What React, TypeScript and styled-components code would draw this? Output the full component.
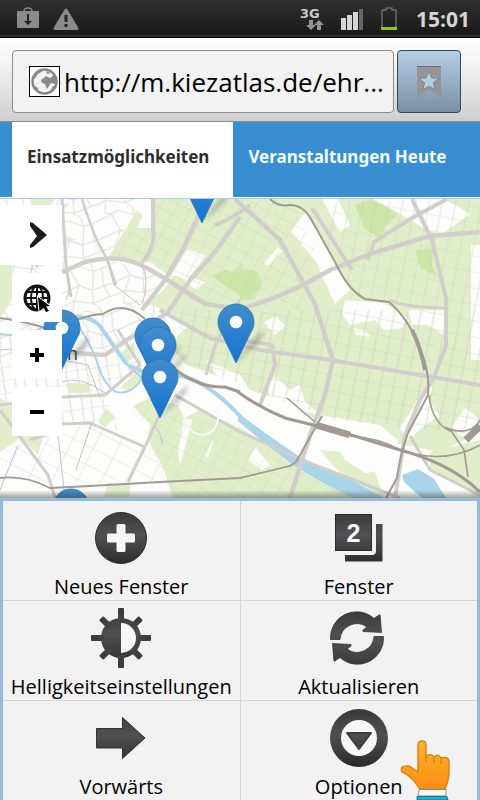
import React from 'react';
import styled, { createGlobalStyle } from 'styled-components';

const GlobalStyle = createGlobalStyle`
  * { box-sizing: border-box; }
  body { margin: 0; font-family: "Open Sans", "Noto Sans", sans-serif; background: #f2f2f2; }
  button { font: inherit; border: 0; padding: 0; }
`;

const Page = styled.div`
  min-height: 100vh;
  display: flex;
  flex-direction: column;
  overflow: hidden;
`;

const StatusBar = styled.header`
  height: 38px;
  display: flex;
  align-items: center;
  justify-content: space-between;
  padding: 0 10px 0 16px;
  background: linear-gradient(#2f2f2f, #191919 35px, #4a4a4a 36px, #000 37px);
`;

const StatusGroup = styled.div<{ $gap: number }>`
  display: flex;
  align-items: center;
  gap: ${(p) => p.$gap}px;
`;

const Network = styled.span`
  display: flex;
  flex-direction: column;
  align-items: flex-end;
  width: 24px;
  color: #c9c9c9;
  font: bold 13px/12px "DejaVu Sans", sans-serif;

  span { align-self: flex-start; }
`;

const Clock = styled.time`
  color: #d6d6d6;
  font-weight: 700;
  font-size: 21px;
  line-height: 24px;
  margin-left: 2px;
`;

const AddressBar = styled.form`
  display: flex;
  gap: 3px;
  height: 84px;
  padding: 12px 19px 21px 12px;
  background: linear-gradient(#fff, #f4f4f4 30%, #cfcfcf);
  border-bottom: 1px solid #8b8f92;
`;

const AddressField = styled.label`
  flex: 1;
  min-width: 0;
  display: flex;
  align-items: center;
  gap: 4px;
  height: 63px;
  padding: 0 8px 0 16px;
  border: 1px solid #8c8c8c;
  border-radius: 4px;
  background: #f2f2f2;
`;

const AddressInput = styled.input`
  flex: 1;
  min-width: 0;
  border: 0;
  padding: 0;
  background: none;
  color: #000;
  font: 26px/36px "Open Sans", sans-serif;
  outline: none;
`;

const BookmarkButton = styled.button`
  width: 64px;
  height: 63px;
  display: grid;
  place-items: center;
  border: 1px solid #35465c;
  border-radius: 4px;
  background: linear-gradient(#b5cde3, #97afc6 50%, #7c8fa3);
`;

const Tabs = styled.nav`
  display: flex;
  height: 76px;
  padding-left: 12px;
  background: #388ed0;
  border-bottom: 1px solid #fff;
`;

const Tab = styled.a<{ $active?: boolean }>`
  padding: 23px 24px 0 15px;
  font-family: "Noto Sans", sans-serif;
  font-size: 17px;
  line-height: 24px;
  font-weight: 700;
  white-space: nowrap;
  text-decoration: none;
  color: ${(p) => (p.$active ? '#2e2e2e' : '#f2fdff')};
  background: ${(p) => (p.$active ? '#fff' : 'transparent')};
`;

const MapArea = styled.main`
  position: relative;
  flex: 1;
  min-height: 300px;
  border-top: 1px solid #a3cfea;
  background: #fcfcfa;
  overflow: hidden;
`;

const MapDrawing = styled.svg`
  position: absolute;
  inset: 0;
  width: 100%;
  height: 100%;
`;

const MapShade = styled.div`
  position: absolute;
  inset: auto 0 0;
  height: 8px;
  background: linear-gradient(transparent, rgba(70, 70, 60, 0.5));
`;

const MapControls = styled.div`
  position: absolute;
  top: 6px;
  left: 0;
  display: flex;
  flex-direction: column;
  align-items: flex-end;
  gap: 8px;
`;

const MapButton = styled.button<{ $wide?: boolean }>`
  display: flex;
  align-items: center;
  justify-content: center;
  width: ${(p) => (p.$wide ? 62 : 50)}px;
  height: ${(p) => (p.$wide ? 60 : 49)}px;
  padding-left: ${(p) => (p.$wide ? 14 : 0)}px;
  background: #fff;
`;

const Menu = styled.div`
  display: grid;
  grid-template-columns: 1fr 1fr;
  gap: 1px;
  padding: 3px 3px 0;
  background:
    linear-gradient(#d3d5d8, #d3d5d8) 3px 3px / calc(100% - 6px) 100% no-repeat,
    #97bbdc;
`;

const MenuItem = styled.button`
  display: flex;
  flex-direction: column;
  align-items: center;
  justify-content: flex-start;
  gap: 6px;
  height: 99px;
  min-width: 0;
  padding-top: 7px;
  background: #f2f2f2;
  color: #000;
  font-size: 20px;
  line-height: 26px;
  white-space: nowrap;
`;

const Pointer = styled.svg`
  position: fixed;
  right: 28px;
  bottom: 0;
  pointer-events: none;
`;

const pins = [
  [202, 182], [153, 336], [158, 345], [160, 377], [236, 322], [62, 328], [71, 507],
];

function Pin({ x, y }: { x: number; y: number }) {
  return (
    <g transform={`translate(${x} ${y})`}>
      <path d="M0 40L13 22Q24 8 28 9Q28 20 0 40Z" fill="#444" opacity=".28" filter="url(#soft)" />
      <path d="M0 41L-14 12C-17 7 -18 4 -18 0A18 18 0 1 1 18 0C18 4 17 7 14 12Z" fill="url(#pin)" stroke="#2474b4" strokeWidth=".8" />
      <circle r="6.3" fill="#fff" />
    </g>
  );
}

function CityMap() {
  return (
    <MapDrawing viewBox="0 199 480 299" preserveAspectRatio="xMidYMid slice" role="img" aria-label="Karte">
      <defs>
        <linearGradient id="pin" x1="0" y1="0" x2="0" y2="1">
          <stop offset="0" stopColor="#438dca" />
          <stop offset="1" stopColor="#1273d4" />
        </linearGradient>
        <filter id="soft"><feGaussianBlur stdDeviation="2" /></filter>
        <pattern id="gridA" width="14" height="12" patternUnits="userSpaceOnUse" patternTransform="rotate(28)">
          <path d="M0 0H14M0 0V12" stroke="#c9cbb9" strokeWidth=".9" fill="none" />
        </pattern>
        <pattern id="gridB" width="13" height="16" patternUnits="userSpaceOnUse" patternTransform="rotate(11)">
          <path d="M0 0H13M5 0V16" stroke="#c9cfb5" strokeWidth=".9" fill="none" />
        </pattern>
        <pattern id="gridC" width="52" height="46" patternUnits="userSpaceOnUse" patternTransform="rotate(-12)">
          <path d="M0 6L20 0 35 9 52 6M0 24L18 20 30 27 52 24M6 46L10 34 28 40 52 36M12 2L18 20 10 34M35 9L30 27 28 40 34 46M44 7L42 25 46 37M30 27L18 20M0 37L10 34M34 0L35 9M6 0L12 2" stroke="#dcd8d6" strokeWidth=".9" fill="none" />
        </pattern>
        <pattern id="gridD" width="21" height="13" patternUnits="userSpaceOnUse" patternTransform="rotate(-8)">
          <path d="M0 0H21M4 0V13M13 0L14 13" stroke="#dcd8d6" strokeWidth=".9" fill="none" />
        </pattern>
        <pattern id="gridE" width="22" height="17" patternUnits="userSpaceOnUse" patternTransform="rotate(27)">
          <path d="M0 0H22M0 0V17" stroke="#dcd8d6" strokeWidth=".9" fill="none" />
        </pattern>
      </defs>

      <rect x="0" y="198" width="480" height="302" fill="#fdfdfc" />
      <path d="M0 199H152L137 210 107 260 152 270 170 312 105 355 62 350 0 360Z" fill="url(#gridC)" />
      <path d="M0 360L62 350 105 355 170 312 140 370 105 395 118 430 90 423 62 424 0 430Z" fill="url(#gridD)" />
      <path d="M0 430L62 424 90 423 145 447 165 470 160 482 90 486 0 478Z" fill="url(#gridE)" />

      <g fill="#e0efca">
        <path d="M107 260L137 210 143 215 137 228 152 228 152 199H480V432L440 452 395 443 360 428 325 420 310 418 275 398 240 387 215 375 186 365 172 348 178 335 190 325 168 312 148 303 165 288 172 278 150 262Z" />
        <path d="M133 406L150 398 178 405 184 418 200 410 240 428 290 455 335 474 350 498H173L164 470 148 440 150 424Z" />
        <path d="M0 215L12 210V300L0 318ZM0 398L20 412 42 440 38 455 20 438 0 452ZM62 235L76 240 66 242ZM98 422L106 408 116 418 104 427ZM122 352L134 342 136 356 124 364ZM120 388L138 370 144 372 142 380 128 390ZM62 205L70 202 64 210ZM30 199H55L50 206H32ZM320 450L345 452 375 472 384 498H362ZM68 383L90 384V393H68ZM108 483L130 485V497H104ZM430 452L480 440V498L430 470ZM410 475L430 480 445 498H425Z" />
      </g>

      <g fill="#fdfdfc">
        <path d="M188 249L206 256 190 276 170 276ZM291 231L305 213 328 247 350 290 335 304 316 262ZM322 199H338L350 225 340 232ZM264 264L278 247 282 251 268 266ZM345 300L384 303 408 318 402 328 384 330 375 320 350 325 342 315ZM372 199H445L470 214 440 235 420 226 400 214 390 208ZM471 245H480V360H471ZM264 322L276 316 285 326 275 335ZM408 310H444V335L428 325H412ZM353 328L367 331 370 337 356 335ZM424 390L434 386 428 400 440 416 425 425 408 440 400 428ZM268 385L275 376 290 390 300 384 304 400 320 415 270 404ZM320 415L350 420 380 425 398 440 385 470 365 473 345 460ZM452 427L465 408 478 418V436L460 436ZM174 272L205 282 196 290ZM205 360L240 375 260 405 232 395ZM178 452L184 418 192 420 180 466ZM205 455L213 440 212 446 208 458ZM248 460L255 447 270 465 262 470Z" />
      </g>

      <g fill="#cbe6a4" opacity=".9">
        <path d="M355 205L372 199 398 214 385 227 380 238 365 230 359 215ZM213 275L225 270 232 272 240 265 248 280 240 296 220 282ZM415 250L433 248 432 265 438 277 420 268ZM240 268L258 272 262 285 250 300H240Z" />
      </g>

      <path d="M152 199H290L320 262 300 310 186 300 152 262H107L125 232 152 228Z" fill="url(#gridA)" opacity=".7" />
      <path d="M338 199H480V310L360 298 320 240Z" fill="url(#gridB)" opacity=".6" />
      <path d="M180 310H480V435L330 420 180 360Z" fill="url(#gridB)" opacity=".8" />
      <path d="M135 405L240 428 350 498H170Z" fill="url(#gridA)" opacity=".6" />

      <g fill="none" stroke="#a9d5ea" strokeLinecap="round">
        <path d="M74 317Q96 316 104 332L126 363" strokeWidth="4" />
        <path d="M72 316Q92 345 98 365T116 392Q132 395 142 378L124 362M0 334Q20 338 45 327" strokeWidth="2" />
        <path d="M130 366Q150 376 182 376Q208 382 240 416" strokeWidth="4" />
      </g>
      <path d="M238 413L268 435 310 464 340 474 384 498H352L318 480 292 464 262 441 238 421Z" fill="#a9d5ea" />
      <path d="M402 475L418 469 434 479 446 498H422L404 482Z" fill="#a9d5ea" />

      <g fill="none" stroke="#d2cecb" strokeWidth="4.5" strokeLinejoin="round">
        <path d="M82 199Q90 225 98 242L107 259L116 285" strokeWidth="2.5" />
        <path d="M62 272L85 262Q120 253 145 267L166 279 205 304 240 309Q285 297 330 270L370 254 430 236 480 232" />
        <path d="M153 199V230Q156 245 142 263" strokeWidth="4" />
        <path d="M206 199L184 247 165 280 142 310M240 217L215 252 190 280 168 312 105 355 60 352M235 199L280 240 315 304 328 345 333 360 325 395 310 435 290 498" />
        <path d="M160 310L210 338 260 350 330 360 420 375 480 385M240 340L272 345 275 365 260 405" strokeWidth="4" />
        <path d="M312 208L352 270M250 205Q230 220 215 225M412 199L432 240 446 298V345L435 375 420 400 405 435 395 498M368 260L374 242 412 218 447 199" strokeWidth="4" />
        <path d="M118 330L140 365 105 395 62 397 0 405M62 424L90 423 145 447 128 482M145 447L175 380M175 395L240 432 310 463 400 498M206 375L215 345 240 300M0 410L48 475 55 498M30 440L62 430M62 199L66 265 71 297M0 242L38 266" strokeWidth="3" />
        <path d="M390 300Q400 307 445 308M410 436L430 470 480 495" strokeWidth="3" />
      </g>

      <g fill="none" stroke="#c8c2bc" strokeWidth="1">
        <path d="M12 225Q40 245 30 275M107 259L114 285 140 305M142 265Q150 280 142 305M64 270Q74 286 66 300M62 360L88 365 100 398M18 445L0 490M58 435L65 498M76 470L92 422M0 350Q35 345 58 370M62 382Q80 375 105 393M155 426Q163 437 162 445" />
        <path d="M185 420Q190 435 205 435Q220 430 218 410" stroke="#f7f7f4" strokeWidth="2" />
      </g>

      <g fill="none" stroke="#a19a91">
        <path d="M0 478Q25 475 50 488L90 486 160 482 240 478 290 466 296 462 322 416" strokeWidth="1.8" />
        <path d="M0 318Q35 323 55 332Q80 315 103 314Q124 300 145 319" strokeWidth="2" />
        <path d="M176 370Q200 388 225 387L240 392" strokeWidth="3" />
        <path d="M238 392Q260 408 285 418L345 433 400 450Q450 463 480 492" strokeWidth="3" />
        <path d="M270 199Q278 207 290 205Q303 205 311 219L335 262Q348 290 365 299L389 302Q410 320 420 350Q430 370 428 395L408 433Q400 455 397 478L386 498" strokeWidth="2" />
        <path d="M287 398L315 422M350 436Q380 438 400 450Q445 465 480 445M429 395Q432 424 452 432L464 450 468 477M444 427Q470 438 480 420M470 438L480 430" strokeWidth="1.6" />
        <path d="M412 330Q421 348 425 370" strokeWidth="4" />
        <path d="M316 425L350 435" strokeWidth="7" />
        <path d="M466 440L480 426" strokeWidth="7" />
      </g>

      <text x="67" y="360" fontSize="18" fill="#3a3a3a" fontFamily="Open Sans">n</text>
      {pins.map(([x, y]) => <Pin key={`${x}-${y}`} x={x} y={y} />)}
    </MapDrawing>
  );
}

const Glyph = ({ id, children }: { id: string; children: React.ReactNode }) => (
  <svg width="60" height="60" viewBox="0 0 60 60" fill={`url(#${id})`} aria-hidden="true">
    <defs>
      <linearGradient id={id} x1="0" y1="0" x2="0" y2="60" gradientUnits="userSpaceOnUse">
        <stop offset="0" stopColor="#383838" />
        <stop offset=".45" stopColor="#505050" />
        <stop offset="1" stopColor="#282828" />
      </linearGradient>
    </defs>
    {children}
  </svg>
);

const refreshArrow = 'M1.5 31.5A26 26 0 0 1 45 10.5L50 7Q51 6 51.2 8L52.5 24.5 34 23.5V22L38 19A17 17 0 0 0 11 31.5Z';

const menu = [
  {
    label: 'Neues Fenster',
    icon: (
      <Glyph id="newWindow">
        <circle cx="30" cy="30" r="25.5" stroke="#2b2b2b" />
        <rect x="25.5" y="16" width="9" height="28" rx="1.5" fill="#f7f7f7" />
        <rect x="16" y="25.5" width="28" height="9" rx="1.5" fill="#f7f7f7" />
      </Glyph>
    ),
  },
  {
    label: 'Fenster',
    icon: (
      <Glyph id="windows">
        <rect x="6.5" y="6.5" width="36" height="36" stroke="#2b2b2b" />
        <path d="M47 16H53.5V53.5H16V47H43Q47 47 47 43Z" />
        <text x="24.5" y="34" textAnchor="middle" fontFamily="Liberation Sans" fontWeight="700" fontSize="25" fill="#f7f7f7">2</text>
      </Glyph>
    ),
  },
  {
    label: 'Helligkeitseinstellungen',
    icon: (
      <Glyph id="brightness">
        <circle cx="30" cy="30" r="20" />
        {[0, 45, 90, 135, 180, 225, 270, 315].map((a) => (
          <rect key={a} x="27" y={a % 90 ? 2 : 0} width="6" height="13" rx="1" transform={`rotate(${a} 30 30)`} />
        ))}
        <path d="M30 15a15 15 0 0 1 0 30Z" fill="#f7f7f7" />
      </Glyph>
    ),
  },
  {
    label: 'Aktualisieren',
    icon: (
      <Glyph id="refresh">
        <path d={refreshArrow} stroke="#2b2b2b" strokeWidth=".7" />
        <path d={refreshArrow} transform="rotate(180 28 30)" stroke="#2b2b2b" strokeWidth=".7" />
      </Glyph>
    ),
  },
  {
    label: 'Vorwärts',
    icon: (
      <Glyph id="forward">
        <path d="M5.5 20.5H31.5V9.5L54 30 31.5 50.5V40H5.5Z" stroke="#333" />
      </Glyph>
    ),
  },
  {
    label: 'Optionen',
    icon: (
      <Glyph id="options">
        <circle cx="30" cy="30" r="29" />
        <circle cx="30" cy="30" r="18" fill="#f7f7f7" />
        <path d="M18 25H42L30 41Z" stroke="#3b3b3b" strokeLinejoin="round" strokeWidth="2" />
      </Glyph>
    ),
  },
];

export default function App() {
  return (
    <>
      <GlobalStyle />
      <Page>
        <StatusBar>
          <StatusGroup $gap={13}>
            <svg width="24" height="24" viewBox="0 0 24 24" aria-hidden="true">
              <path d="M8 4Q8 1 12 1T16 4" fill="none" stroke="#888" strokeWidth="1.5" />
              <path d="M1 4H23V21H1Z" fill="#8b8b8b" />
              <path d="M11 7h2v7h3l-4 4-4-4h3Z" fill="#222" />
            </svg>
            <svg width="26" height="24" viewBox="0 0 26 24" aria-hidden="true">
              <path d="M13 3L24 21.5H2Z" fill="#8b8b8b" stroke="#8b8b8b" strokeWidth="3" strokeLinejoin="round" />
              <path d="M11.5 8h3v7h-3zM11.5 17h3v3h-3z" fill="#222" />
            </svg>
          </StatusGroup>
          <StatusGroup $gap={16}>
            <Network>
              <span>3G</span>
              <svg width="18" height="10" viewBox="0 0 18 10" aria-hidden="true">
                <path d="M3 0h4v5h3l-5 5-5-5h3ZM11 10h4V5h3l-5-5-5 5h3Z" fill="#949494" />
              </svg>
            </Network>
            <svg width="24" height="22" viewBox="0 0 24 22" aria-hidden="true">
              <path d="M1 10h5v12H1zM7 7h5v15H7zM13 4h5v18h-5z" fill="#d5d5d5" />
              <path d="M19 1h4v21h-4z" fill="#666" />
            </svg>
            <svg width="18" height="24" viewBox="0 0 18 24" aria-hidden="true">
              <path d="M6 1h6v2h4v18H2V3h4Z" fill="none" stroke="#6b6b6b" strokeWidth="1.5" />
              <path d="M1 20h16v3H1z" fill="#94c800" />
            </svg>
            <Clock>15:01</Clock>
          </StatusGroup>
        </StatusBar>

        <AddressBar>
          <AddressField>
            <svg width="31" height="31" viewBox="0 0 31 31" aria-hidden="true">
              <rect x=".5" y=".5" width="30" height="30" fill="#fff" stroke="#000" />
              <circle cx="15.5" cy="15.5" r="12" fill="#f3f3f3" stroke="#858585" strokeWidth="2.5" />
              <path d="M4 10Q8 4 14 5L9 8 7 11 4 14ZM12 14L17 10 21 12 25 9Q28 15 26 18L22 17 18 23 16 18 13 17ZM17 5L22 7 18 8ZM4 19L9 22 9 26ZM21 25L24 20 26 20Z" fill="#8a8a8a" />
            </svg>
            <AddressInput aria-label="Adresse" defaultValue="http://m.kiezatlas.de/ehr..." />
          </AddressField>
          <BookmarkButton type="button" aria-label="Lesezeichen">
            <svg width="26" height="34" viewBox="0 0 26 34" aria-hidden="true">
              <path d="M1 1H25V33L13 24 1 33Z" fill="#959595" />
              <path d="M1 1.5H25" stroke="#6e7275" />
              <path d="M13 6L15.7 13 23 13.3 17.3 17.8 19.3 25 13 21 6.7 25 8.7 17.8 3 13.3 10.3 13Z" fill="#b4cee5" stroke="#74797e" strokeWidth=".7" />
            </svg>
          </BookmarkButton>
        </AddressBar>

        <Tabs>
          <Tab href="#orte" $active>Einsatzmöglichkeiten</Tab>
          <Tab href="#heute">Veranstaltungen Heute</Tab>
        </Tabs>

        <MapArea>
          <CityMap />
          <MapShade />
          <MapControls>
            <MapButton $wide type="button" aria-label="Weiter">
              <svg width="20" height="28" viewBox="0 0 20 28" aria-hidden="true">
                <path d="M2 1L5 2 19 14 5 26 2 27 2 24 9 15 2 5Z" fill="#1c1c1c" />
              </svg>
            </MapButton>
            <MapButton type="button" aria-label="Gesamte Karte">
              <svg width="28" height="28" viewBox="0 0 28 28" aria-hidden="true">
                <g fill="none" stroke="#111" strokeWidth="2">
                  <circle cx="14" cy="14" r="12" strokeWidth="3" />
                  <ellipse cx="14" cy="14" rx="6" ry="12" />
                  <path d="M14 2V26M2 14H26M4 8H24M4 20H24" />
                </g>
                <path d="M15 13L27 22 23 22.5 26 27 23 28 20.5 24 16.5 27Z" fill="#000" stroke="#fff" strokeWidth="2" paintOrder="stroke" />
              </svg>
            </MapButton>
            <MapButton type="button" aria-label="Vergrößern">
              <svg width="14" height="14" viewBox="0 0 14 14" aria-hidden="true"><path d="M5 0h4v5h5v4H9v5H5V9H0V5h5Z" /></svg>
            </MapButton>
            <MapButton type="button" aria-label="Verkleinern">
              <svg width="14" height="14" viewBox="0 0 14 14" aria-hidden="true"><path d="M0 5h14v4H0Z" /></svg>
            </MapButton>
          </MapControls>
        </MapArea>

        <Menu role="menu">
          {menu.map((item) => (
            <MenuItem key={item.label} role="menuitem" type="button">
              {item.icon}
              {item.label}
            </MenuItem>
          ))}
        </Menu>
        <Pointer width="52" height="60" viewBox="0 0 52 60" aria-hidden="true">
          <defs>
            <linearGradient id="hand" x1="0" y1="0" x2="0" y2="1">
              <stop offset="0" stopColor="#ffb52c" />
              <stop offset="1" stopColor="#fb8d14" />
            </linearGradient>
          </defs>
          <path d="M18 5Q18 1 22 1T26 5V17Q30 12 34 17Q38 13 41 18Q49 16 49 22V32Q49 40 45 49H20L15 42Q8 34 2 32Q-1 25 9 26L18 32Z" fill="url(#hand)" stroke="#dc850e" strokeWidth="1.5" />
          <path d="M26 17V22M34 18V23M41 19V24" stroke="#dc850e" strokeWidth="1.5" />
          <path d="M19 49.5H46V56H18Z" fill="#f7f7f7" stroke="#777" strokeWidth=".8" />
          <path d="M17 56.5H47L48 60H17Z" fill="#00bde0" stroke="#256" strokeWidth=".8" />
        </Pointer>
      </Page>
    </>
  );
}
